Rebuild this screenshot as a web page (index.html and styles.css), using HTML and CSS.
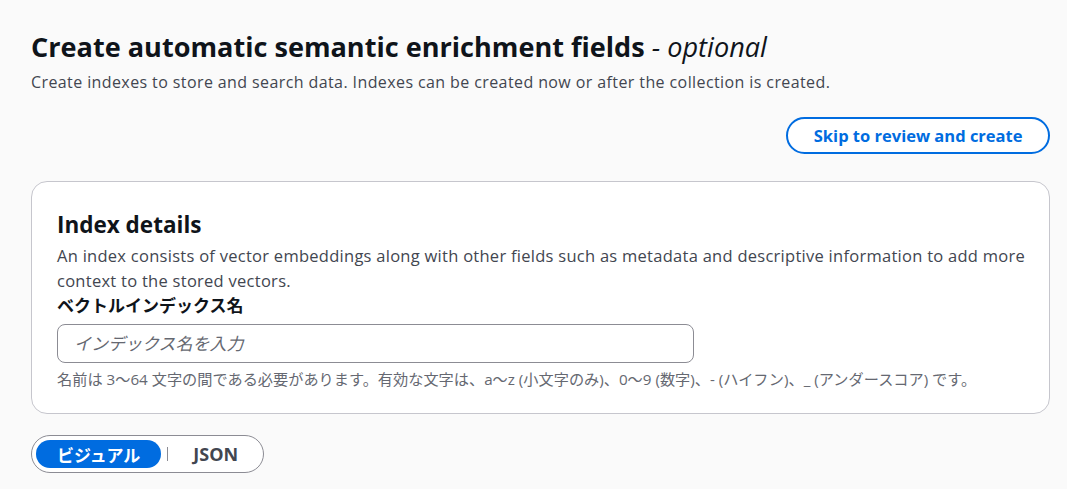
FILE: index.html
```html
<!DOCTYPE html>
<html lang="ja">
<head>
<meta charset="utf-8">
<link rel="stylesheet" href="styles.css">
</head>
<body>
<main class="page">
  <header class="page-header">
    <h1 class="title">Create automatic semantic enrichment fields <span class="optional">- optional</span></h1>
    <p class="subtitle">Create indexes to store and search data. Indexes can be created now or after the collection is created.</p>
  </header>
  <div class="actions">
    <button class="btn-skip">Skip to review and create</button>
  </div>
  <section class="card">
    <h2 class="card-title">Index details</h2>
    <p class="card-desc">An index consists of vector embeddings along with other fields such as metadata and descriptive information to add more context to the stored vectors.</p>
    <label class="field-label" for="idx">ベクトルインデックス名</label>
    <input id="idx" class="field-input" type="text" placeholder="インデックス名を入力">
    <p class="field-help">名前は 3〜64 文字の間である必要があります。有効な文字は、a〜z (小文字のみ)、0〜9 (数字)、- (ハイフン)、_ (アンダースコア) です。</p>
  </section>
  <div class="segmented">
    <button class="seg seg-active">ビジュアル</button>
    <span class="seg-divider"></span>
    <button class="seg seg-json">JSON</button>
  </div>
</main>
</body>
</html>
```
FILE: styles.css
```css
* { box-sizing: border-box; }
html, body { margin: 0; padding: 0; }
body {
  background: #fafafa;
  font-family: "Open Sans", "Noto Sans CJK JP", sans-serif;
  color: #0f141a;
}
.page {
  padding: 29px 17px 0 31px;
}
.title {
  margin: 0;
  font-size: 27.1px;
  line-height: 36px;
  font-weight: 700;
}
.optional {
  font-weight: 400;
  font-style: italic;
}
.subtitle {
  margin: 6px 0 0;
  font-size: 16px;
  line-height: 22px;
  letter-spacing: 0.4px;
  color: #424650;
}
.actions {
  display: flex;
  justify-content: flex-end;
  margin-top: 24px;
}
.btn-skip {
  height: 37px;
  padding: 0 25.5px;
  border: 2px solid #006ce0;
  border-radius: 20px;
  background: #fff;
  color: #006ce0;
  font-family: inherit;
  font-size: 16.5px;
  font-weight: 700;
}
.card {
  margin-top: 27px;
  background: #fff;
  border: 1px solid #c6c6cd;
  border-radius: 16px;
  padding: 28px 18px 23px 25px;
}
.card-title {
  margin: 0;
  font-size: 22.5px;
  line-height: 30px;
  font-weight: 700;
}
.card-desc {
  margin: 3px 0 0;
  font-size: 16.5px;
  line-height: 25px;
  letter-spacing: 0.27px;
  color: #424650;
}
.field-label {
  display: block;
  font-size: 17px;
  line-height: 25px;
  font-weight: 700;
}
.field-input {
  display: block;
  margin-top: 6px;
  width: 637px;
  height: 39px;
  border: 1px solid #8c8c94;
  border-radius: 8px;
  padding: 0 16px;
  font-family: inherit;
  font-size: 17px;
  background: #fff;
}
.field-input::placeholder {
  color: #656871;
  font-style: italic;
}
.field-help {
  margin: 5px 0 0;
  font-size: 15.2px;
  line-height: 22px;
  color: #656871;
}
.segmented {
  display: inline-flex;
  align-items: center;
  margin-top: 21px;
  padding: 4px;
  border: 1px solid #8c8c94;
  border-radius: 20px;
  background: #fff;
}
.seg {
  height: 28px;
  border: 0;
  background: transparent;
  padding: 0 21px;
  border-radius: 16px;
  font-family: inherit;
  font-size: 17px;
  font-weight: 700;
  color: #424650;
}
.seg-active {
  background: #006ce0;
  color: #fff;
}
.seg-json {
  padding: 0 21px 0 25px;
  font-size: 18px;
}
.seg-divider {
  width: 1px;
  height: 14px;
  background: #8c8c94;
  margin-left: 6px;
}
```
